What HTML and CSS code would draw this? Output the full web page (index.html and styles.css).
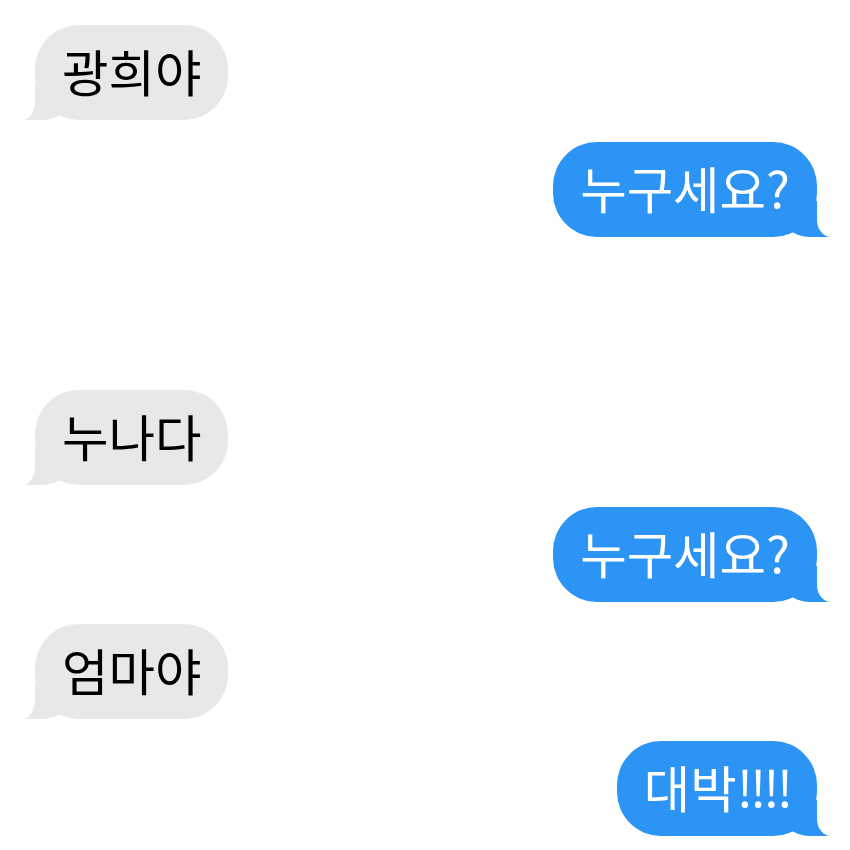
FILE: index.html
```html
<!DOCTYPE html>
<html lang="ko">
<head>
  <meta charset="UTF-8">
  <meta name="viewport" content="width=device-width, initial-scale=1.0">
  <title>Messages</title>
  <link rel="stylesheet" href="styles.css">
</head>
<body>

  <div class="chat">
    <div class="msg them">광희야</div>
    <div class="msg me">누구세요?</div>
    <div class="msg them later">누나다</div>
    <div class="msg me">누구세요?</div>
    <div class="msg them">엄마야</div>
    <div class="msg me">대박<span class="bang">!!!!</span></div>
  </div>

</body>
</html>
```

FILE: styles.css
```css
/* Reset styling */
* {
  margin: 0;
  padding: 0;
  box-sizing: border-box;
}

body {
  font-family: "Noto Sans CJK KR", "Noto Sans", sans-serif;
  background: #fff;
  width: 850px;
  height: 850px;
  overflow: hidden;
}

.chat {
  display: flex;
  flex-direction: column;
  gap: 22px;
  padding: 25px 33px 0 35px;
}

.msg {
  position: relative;
  z-index: 0;
  padding: 18px 27px 22px;
  border-radius: 44px;
  font-size: 50.5px;
  line-height: 55px;
  height: 95px;
}

/* tail pieces sit under the text */
.msg::before,
.msg::after {
  content: "";
  position: absolute;
  bottom: 0;
  height: 36px;
  z-index: -1;
}

/* Received bubbles */
.them {
  align-self: flex-start;
  background-color: #e8e8ea;
  color: #000;
}

.them::before {
  left: -12px;
  width: 44px;
  background-color: #e8e8ea;
  border-bottom-right-radius: 26px 16px;
}

.them::after {
  left: -40px;
  width: 40px;
  background-color: #fff;
  border-bottom-right-radius: 13px 19px;
}

/* Sent bubbles */
.me {
  align-self: flex-end;
  background-color: #2b94f5;
  color: #fff;
}

.me::before {
  right: -13px;
  width: 45px;
  background-color: #2b94f5;
  border-bottom-left-radius: 26px 16px;
}

.me::after {
  right: -40px;
  width: 40px;
  background-color: #fff;
  border-bottom-left-radius: 14px 17px;
}

.bang {
  letter-spacing: -3px;
}

.later {
  margin-top: 131px;
}
```
